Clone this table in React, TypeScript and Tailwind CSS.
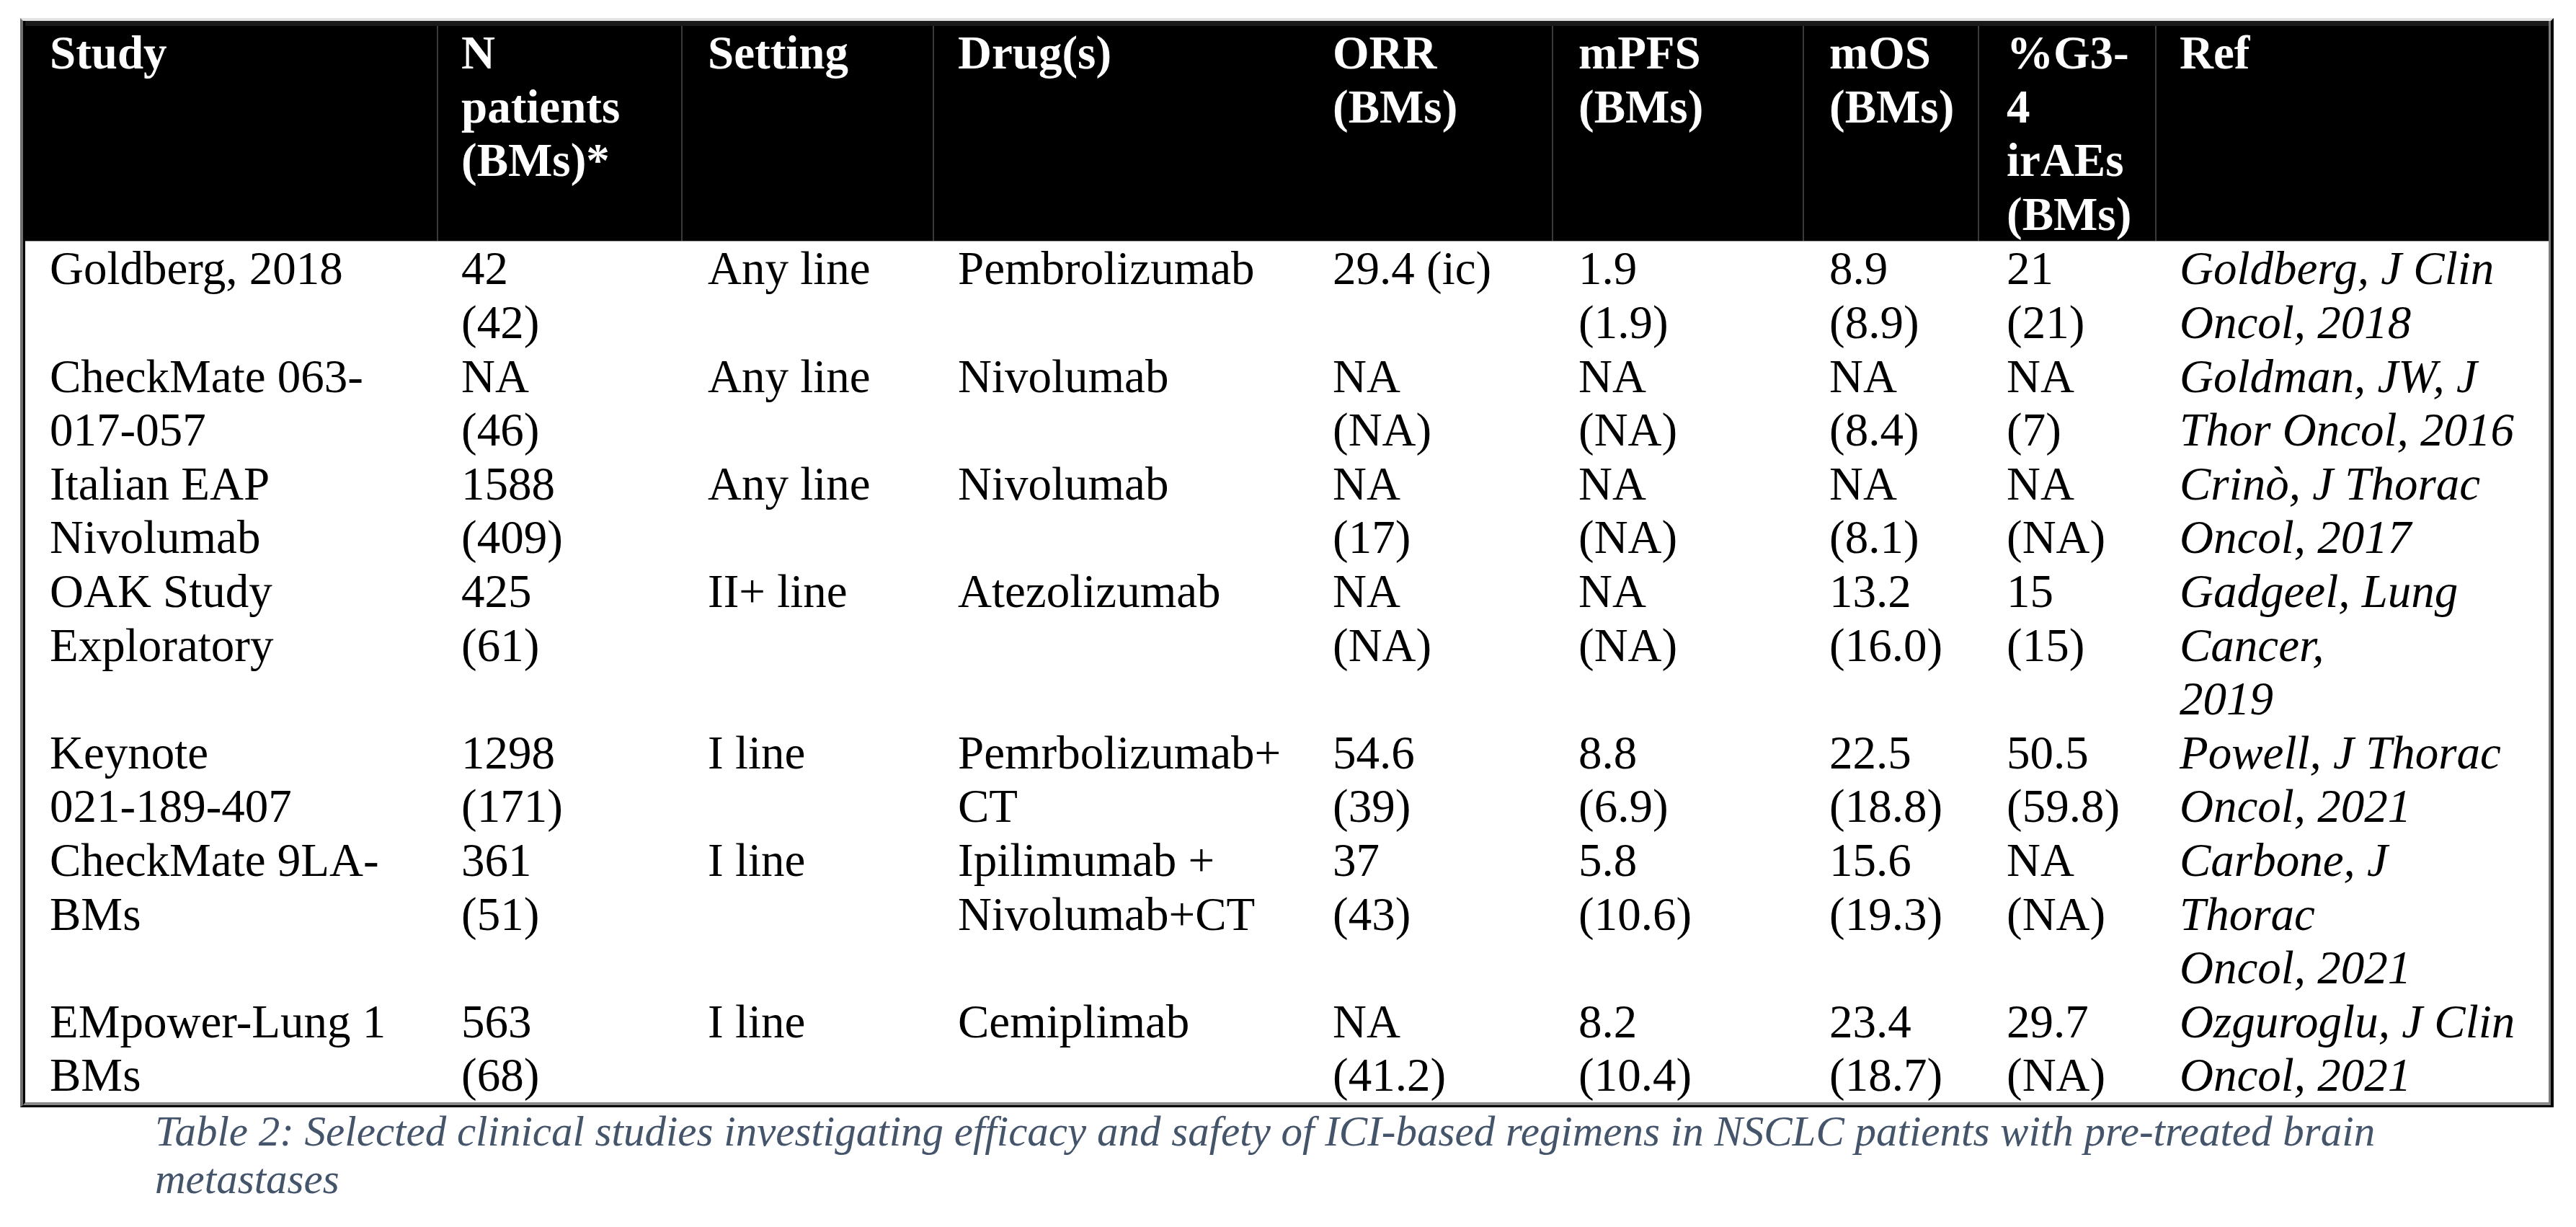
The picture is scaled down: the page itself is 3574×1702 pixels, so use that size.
import React from "react";

type Row = string[][];

const grid = "grid grid-cols-[573px_339px_349px_522px_337px_348px_243px_246px_544px]";

// left padding per column, measured from the reference
const pads = [
  "pl-[34px]",
  "pl-[32px]",
  "pl-[35px]",
  "pl-[33px]",
  "pl-[31px]",
  "pl-[35px]",
  "pl-[35px]",
  "pl-[38px]",
  "pl-[32px]",
];

const header: { lines: string[]; divider: boolean }[] = [
  { lines: ["Study"], divider: true },
  { lines: ["N", "patients", "(BMs)*"], divider: true },
  { lines: ["Setting"], divider: true },
  { lines: ["Drug(s)"], divider: false },
  { lines: ["ORR", "(BMs)"], divider: true },
  { lines: ["mPFS", "(BMs)"], divider: true },
  { lines: ["mOS", "(BMs)"], divider: true },
  { lines: ["%G3-", "4", "irAEs", "(BMs)"], divider: true },
  { lines: ["Ref"], divider: false },
];

const rows: Row[] = [
  [
    ["Goldberg, 2018"],
    ["42", "(42)"],
    ["Any line"],
    ["Pembrolizumab"],
    ["29.4 (ic)"],
    ["1.9", "(1.9)"],
    ["8.9", "(8.9)"],
    ["21", "(21)"],
    ["Goldberg, J Clin", "Oncol, 2018"],
  ],
  [
    ["CheckMate 063-", "017-057"],
    ["NA", "(46)"],
    ["Any line"],
    ["Nivolumab"],
    ["NA", "(NA)"],
    ["NA", "(NA)"],
    ["NA", "(8.4)"],
    ["NA", "(7)"],
    ["Goldman, JW, J", "Thor Oncol, 2016"],
  ],
  [
    ["Italian EAP", "Nivolumab"],
    ["1588", "(409)"],
    ["Any line"],
    ["Nivolumab"],
    ["NA", "(17)"],
    ["NA", "(NA)"],
    ["NA", "(8.1)"],
    ["NA", "(NA)"],
    ["Crinò, J Thorac", "Oncol, 2017"],
  ],
  [
    ["OAK Study", "Exploratory"],
    ["425", "(61)"],
    ["II+ line"],
    ["Atezolizumab"],
    ["NA", "(NA)"],
    ["NA", "(NA)"],
    ["13.2", "(16.0)"],
    ["15", "(15)"],
    ["Gadgeel, Lung", "Cancer,", "2019"],
  ],
  [
    ["Keynote", "021-189-407"],
    ["1298", "(171)"],
    ["I line"],
    ["Pemrbolizumab+", "CT"],
    ["54.6", "(39)"],
    ["8.8", "(6.9)"],
    ["22.5", "(18.8)"],
    ["50.5", "(59.8)"],
    ["Powell, J Thorac", "Oncol, 2021"],
  ],
  [
    ["CheckMate 9LA-", "BMs"],
    ["361", "(51)"],
    ["I line"],
    ["Ipilimumab +", "Nivolumab+CT"],
    ["37", "(43)"],
    ["5.8", "(10.6)"],
    ["15.6", "(19.3)"],
    ["NA", "(NA)"],
    ["Carbone, J", "Thorac", "Oncol, 2021"],
  ],
  [
    ["EMpower-Lung 1", "BMs"],
    ["563", "(68)"],
    ["I line"],
    ["Cemiplimab"],
    ["NA", "(41.2)"],
    ["8.2", "(10.4)"],
    ["23.4", "(18.7)"],
    ["29.7", "(NA)"],
    ["Ozguroglu, J Clin", "Oncol, 2021"],
  ],
];

function Lines({ lines }: { lines: string[] }) {
  return (
    <>
      {lines.map((l, i) => (
        <div key={i} className="whitespace-nowrap">
          {l}
        </div>
      ))}
    </>
  );
}

export default function App() {
  return (
    <div className="w-[3574px] h-[1702px] bg-white pt-[25px] pl-[28px] font-['Liberation_Serif',serif] text-[65px] leading-[74.6px] text-black">
      <div className="w-[3515px] border-t-4 border-t-[#e2e2e2] border-l-4 border-l-[#6f6f6f] border-r-4 border-r-black border-b-[3px] border-b-black">
        <div className="border-l-[3px] border-l-black border-r-[3px] border-r-[#7c7c7c] border-b-4 border-b-[#8a8a8a]">
          {/* header */}
          <div className={`${grid} bg-black border-t-[7px] border-t-[#1a1a1a] border-b border-b-[#9a9a9a] font-bold text-white`}>
            {header.map((h, i) => (
              <div
                key={i}
                className={`${pads[i]} ${h.divider ? "border-r-2 border-r-[#3a3a3a]" : ""}`}
              >
                <Lines lines={h.lines} />
              </div>
            ))}
          </div>

          {/* body */}
          {rows.map((row, r) => (
            <div key={r} className={grid}>
              {row.map((cell, c) => (
                <div key={c} className={`${pads[c]} ${c === 8 ? "italic" : ""}`}>
                  <Lines lines={cell} />
                </div>
              ))}
            </div>
          ))}
        </div>
      </div>

      <div className="ml-[187px] italic text-[59px] leading-[66px] text-[#44546a]">
        <div className="whitespace-nowrap">
          Table 2: Selected clinical studies investigating efficacy and safety of ICI-based regimens in NSCLC patients with pre-treated brain
        </div>
        <div className="whitespace-nowrap">metastases</div>
      </div>
    </div>
  );
}
